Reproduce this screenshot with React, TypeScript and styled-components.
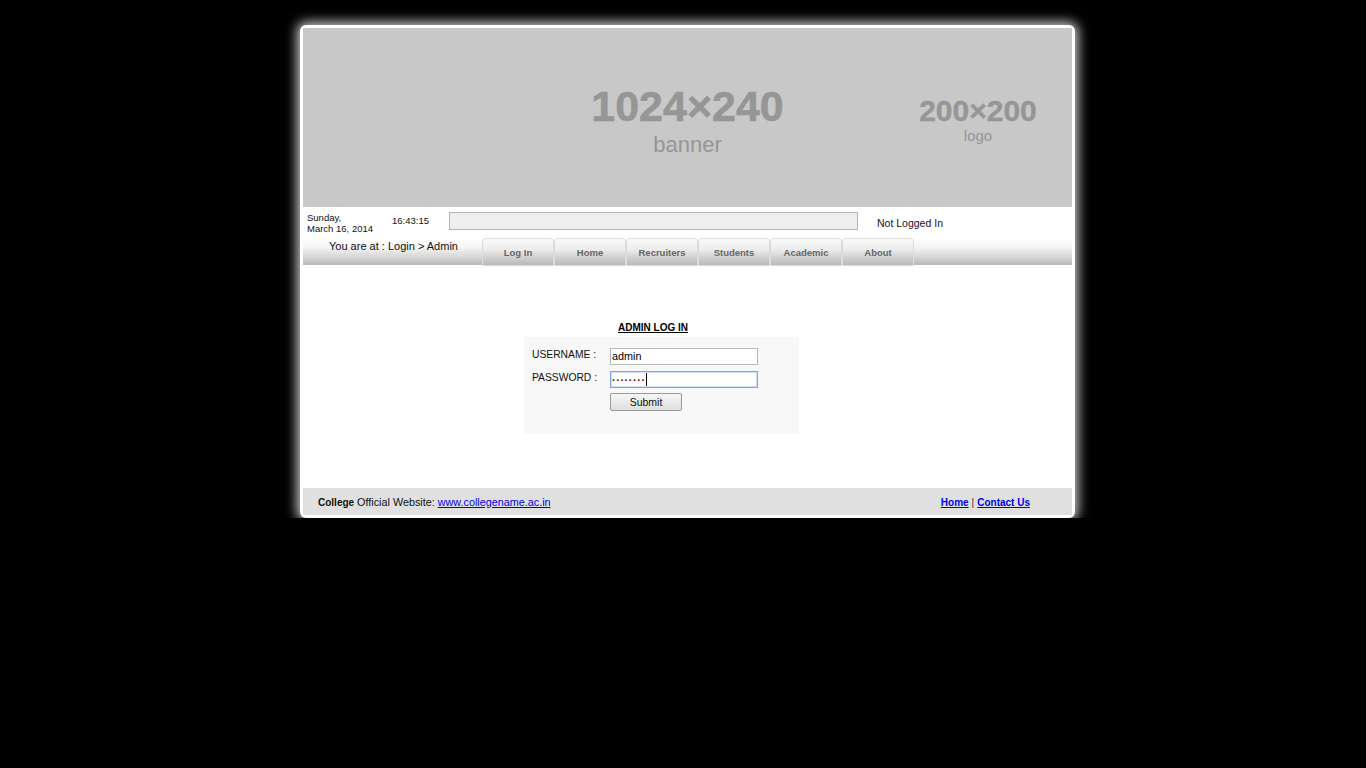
import React, { FC } from 'react';
import styled, { createGlobalStyle } from 'styled-components';

const GlobalStyle = createGlobalStyle`
    html, body {
        margin: 0;
        padding: 0;
        background: #000;
        font-family: 'Liberation Sans', Arial, sans-serif;
    }
`;

const Page = styled.div`
    width: 769px;
    margin: 25px 0 0 300px;
    border: 3px solid #fff;
    border-radius: 6px;
    background: #fff;
    box-shadow: 0 0 12px 3px rgba(255, 255, 255, 0.8);
`;

const Banner = styled.div`
    position: relative;
    height: 179px;
    background: #c8c8c8;
    color: #969696;
    display: flex;
    justify-content: center;
`;

const BannerLabel = styled.div`
    display: flex;
    flex-direction: column;
    align-items: center;
    padding-top: 56px;
`;

const BigSize = styled.span`
    font-size: 43px;
    font-weight: bold;
    line-height: 44px;
    -webkit-text-stroke: 0.6px #969696;
`;

const BannerName = styled.span`
    font-size: 22px;
    line-height: 26px;
    margin-top: 4px;
`;

const LogoLabel = styled.div`
    position: absolute;
    left: 575px;
    top: 68px;
    width: 200px;
    display: flex;
    flex-direction: column;
    align-items: center;
`;

const LogoSize = styled.span`
    font-size: 30px;
    font-weight: bold;
    line-height: 30px;
    -webkit-text-stroke: 0.4px #969696;
`;

const LogoName = styled.span`
    font-size: 15px;
    line-height: 18px;
    margin-top: 1px;
`;

const InfoRow = styled.div`
    height: 31px;
    display: flex;
    align-items: flex-start;
    font-size: 9.5px;
    color: #111;
`;

const DateBlock = styled.div`
    width: 85px;
    padding: 5px 0 0 4px;
    line-height: 11px;
`;

const Clock = styled.div`
    width: 57px;
    padding-top: 8px;
`;

const StatusBar = styled.div`
    width: 407px;
    height: 16px;
    margin-top: 5px;
    border: 1px solid #b4b4b4;
    background: #eee;
`;

const LoginState = styled.div`
    margin: 10px 0 0 19px;
    font-size: 10.5px;
    color: #20102a;
`;

const NavBar = styled.div`
    height: 27px;
    display: flex;
    background: linear-gradient(#fff 0%, #f4f4f4 35%, #d6d6d6 70%, #b8b8b8 100%);
`;

const Crumbs = styled.div`
    width: 153px;
    padding: 2px 0 0 26px;
    font-size: 11px;
    color: #111;
    white-space: nowrap;
`;

const Tabs = styled.div`
    display: flex;
`;

const Tab = styled.a`
    width: 70px;
    height: 26px;
    border: 1px solid #dcdcdc;
    border-radius: 4px 4px 0 0;
    background: linear-gradient(#fafafa 0%, #ececec 40%, #c9c9c9 80%, #b9b9b9 100%);
    display: flex;
    align-items: center;
    justify-content: center;
    font-size: 9.5px;
    font-weight: bold;
    color: #666;
    text-decoration: none;
`;

const Main = styled.div`
    height: 223px;
    padding: 57px 0 0 221px;
    box-sizing: border-box;
`;

const FormTitle = styled.div`
    width: 275px;
    box-sizing: border-box;
    padding-right: 17px;
    text-align: center;
    font-size: 10px;
    font-weight: bold;
    text-decoration: underline;
    color: #000;
    line-height: 12px;
`;

const FormBox = styled.div`
    width: 275px;
    height: 97px;
    margin-top: 3px;
    padding: 11px 0 0 8px;
    box-sizing: border-box;
    background: #f8f8f8;
    display: grid;
    grid-template-columns: 78px 148px;
    grid-auto-rows: min-content;
    row-gap: 6px;
`;

const Label = styled.div`
    font-size: 10.3px;
    color: #111;
    line-height: 11px;
    padding-top: 1px;
    white-space: nowrap;
`;

const Field = styled.div<{ $focused?: boolean }>`
    height: 17px;
    box-sizing: border-box;
    border: 1px solid ${(p) => (p.$focused ? '#7aa6e8' : '#b9b9b9')};
    box-shadow: ${(p) => (p.$focused ? 'inset 0 0 0 1px #d2e1f8' : 'none')};
    background: #fff;
    font-size: 10.8px;
    line-height: 15px;
    padding-left: 1px;
    color: #000;
    display: flex;
    align-items: center;
`;

const Dots = styled.span`
    color: #600;
    font-weight: bold;
    letter-spacing: 1.2px;
    line-height: 10px;
    margin-top: -6px;
`;

const Caret = styled.span`
    width: 1px;
    height: 13px;
    background: #000;
`;

const SubmitButton = styled.button`
    grid-column: 2;
    width: 72px;
    height: 18px;
    margin-top: -1px;
    border: 1px solid #9a9a9a;
    border-radius: 2px;
    background: linear-gradient(#f6f6f6, #dedede);
    font-family: 'Liberation Sans', Arial, sans-serif;
    font-size: 10.5px;
    color: #111;
    padding: 0;
`;

const Footer = styled.div`
    height: 27px;
    background: #e0e0e0;
    display: flex;
    align-items: center;
    justify-content: space-between;
    padding: 0 42px 0 15px;
    font-size: 10.8px;
    color: #111;
`;

const Strong = styled.b`
    font-size: 10px;
`;

const Link = styled.a`
    color: #00e;
    text-decoration: underline;
`;

const BoldLink = styled(Link)`
    font-weight: bold;
    font-size: 10px;
`;

const Sep = styled.span`
    color: #333;
    margin: 0 3px;
    font-size: 10px;
`;

const tabs = ['Log In', 'Home', 'Recruiters', 'Students', 'Academic', 'About'];

const App: FC = () => {
    return (
        <>
            <GlobalStyle />
            <Page>
                <Banner>
                    <BannerLabel>
                        <BigSize>1024×240</BigSize>
                        <BannerName>banner</BannerName>
                    </BannerLabel>
                    <LogoLabel>
                        <LogoSize>200×200</LogoSize>
                        <LogoName>logo</LogoName>
                    </LogoLabel>
                </Banner>
                <InfoRow>
                    <DateBlock>
                        Sunday,
                        <br />
                        March 16, 2014
                    </DateBlock>
                    <Clock>16:43:15</Clock>
                    <StatusBar />
                    <LoginState>Not Logged In</LoginState>
                </InfoRow>
                <NavBar>
                    <Crumbs>You are at : Login &gt; Admin</Crumbs>
                    <Tabs>
                        {tabs.map((t) => (
                            <Tab key={t} href="#">
                                {t}
                            </Tab>
                        ))}
                    </Tabs>
                </NavBar>
                <Main>
                    <FormTitle>ADMIN LOG IN</FormTitle>
                    <FormBox>
                        <Label>USERNAME :</Label>
                        <Field>admin</Field>
                        <Label>PASSWORD :</Label>
                        <Field $focused>
                            <Dots>........</Dots>
                            <Caret />
                        </Field>
                        <SubmitButton type="button">Submit</SubmitButton>
                    </FormBox>
                </Main>
                <Footer>
                    <span>
                        <Strong>College</Strong> Official Website: <Link href="#">www.collegename.ac.in</Link>
                    </span>
                    <span>
                        <BoldLink href="#">Home</BoldLink>
                        <Sep>|</Sep>
                        <BoldLink href="#">Contact Us</BoldLink>
                    </span>
                </Footer>
            </Page>
        </>
    );
};

export default App;
